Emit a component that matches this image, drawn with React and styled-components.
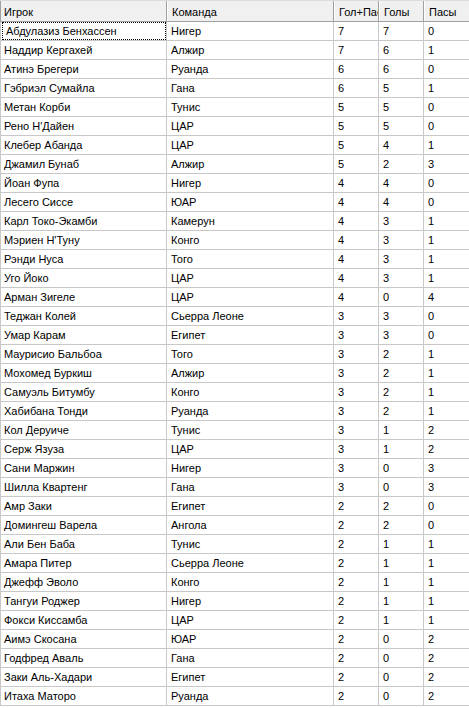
import React from "react";
import styled, { createGlobalStyle } from "styled-components";

const Global = createGlobalStyle`
  html, body { margin: 0; padding: 0; background: #fff; }
  body { font-family: Tahoma, "Liberation Sans", "DejaVu Sans", sans-serif; font-size: 11px; color: #000; }
`;

const rows = [
  ["Абдулазиз Бенхассен", "Нигер", 7, 7, 0],
  ["Наддир Кергахей", "Алжир", 7, 6, 1],
  ["Атинэ Брегери", "Руанда", 6, 6, 0],
  ["Гэбриэл Сумайла", "Гана", 6, 5, 1],
  ["Метан Корби", "Тунис", 5, 5, 0],
  ["Рено Н'Дайен", "ЦАР", 5, 5, 0],
  ["Клебер Абанда", "ЦАР", 5, 4, 1],
  ["Джамил Бунаб", "Алжир", 5, 2, 3],
  ["Йоан Фупа", "Нигер", 4, 4, 0],
  ["Лесего Сиссе", "ЮАР", 4, 4, 0],
  ["Карл Токо-Экамби", "Камерун", 4, 3, 1],
  ["Мэриен Н'Туну", "Конго", 4, 3, 1],
  ["Рэнди Нуса", "Того", 4, 3, 1],
  ["Уго Йоко", "ЦАР", 4, 3, 1],
  ["Арман Зигеле", "ЦАР", 4, 0, 4],
  ["Теджан Колей", "Сьерра Леоне", 3, 3, 0],
  ["Умар Карам", "Египет", 3, 3, 0],
  ["Маурисио Бальбоа", "Того", 3, 2, 1],
  ["Мохомед Буркиш", "Алжир", 3, 2, 1],
  ["Самуэль Битумбу", "Конго", 3, 2, 1],
  ["Хабибана Тонди", "Руанда", 3, 2, 1],
  ["Кол Деруиче", "Тунис", 3, 1, 2],
  ["Серж Язуза", "ЦАР", 3, 1, 2],
  ["Сани Маржин", "Нигер", 3, 0, 3],
  ["Шилла Квартенг", "Гана", 3, 0, 3],
  ["Амр Заки", "Египет", 2, 2, 0],
  ["Домингеш Варела", "Ангола", 2, 2, 0],
  ["Али Бен Баба", "Тунис", 2, 1, 1],
  ["Амара Питер", "Сьерра Леоне", 2, 1, 1],
  ["Джефф Эволо", "Конго", 2, 1, 1],
  ["Тангуи Роджер", "Нигер", 2, 1, 1],
  ["Фокси Киссамба", "ЦАР", 2, 1, 1],
  ["Аимэ Скосана", "ЮАР", 2, 0, 2],
  ["Годфред Аваль", "Гана", 2, 0, 2],
  ["Заки Аль-Хадари", "Египет", 2, 0, 2],
  ["Итаха Маторо", "Руанда", 2, 0, 2],
];

const COLS = "167px 167px 45px 45px 1fr";

const List = styled.div`
  width: 469px;
  height: 708px;
  overflow: hidden;
  background: #fff;
`;

const HeaderRow = styled.div`
  display: grid;
  grid-template-columns: ${COLS};
  height: 22px;
  box-sizing: border-box;
  background: #f0f0f0;
  border-top: 1px solid #dcdcdc;
  border-bottom: 1px solid #a0a0a0;
`;

const HeaderCell = styled.div`
  box-sizing: border-box;
  height: 20px;
  padding: 2px 0 0 4px;
  line-height: 18px;
  white-space: nowrap;
  overflow: hidden;
  border-right: 1px solid #a0a0a0;
  border-left: 1px solid #ffffff;
  &:first-child { border-left: 1px solid #a0a0a0; padding-left: 3px; }
  &:last-child { border-right: none; }
`;

const Row = styled.div`
  display: grid;
  grid-template-columns: ${COLS};
  height: 19px;
  box-sizing: border-box;
  border-bottom: 1px solid #c8c8c8;
`;

const Cell = styled.div`
  box-sizing: border-box;
  height: 18px;
  line-height: 19px;
  padding-left: ${(p) => (p.$first ? "3px" : "4px")};
  white-space: nowrap;
  overflow: hidden;
  border-right: 1px solid #c8c8c8;
  border-left: ${(p) => (p.$first ? "1px solid #c8c8c8" : "none")};
  &:last-child { border-right: none; }
`;

const FocusCell = styled.div`
  box-sizing: border-box;
  height: 18px;
  border-right: 1px solid #c8c8c8;
  border-left: 1px solid #c8c8c8;
`;

const Focus = styled.div`
  box-sizing: border-box;
  height: 18px;
  line-height: 17px;
  padding-left: 3px;
  margin-left: 1px;
  white-space: nowrap;
  overflow: hidden;
  border: 1px dotted #000;
`;

export default function App() {
  const headers = ["Игрок", "Команда", "Гол+Пас", "Голы", "Пасы"];
  return (
    <>
      <Global />
      <List>
        <HeaderRow>
          {headers.map((h) => (
            <HeaderCell key={h}>{h}</HeaderCell>
          ))}
        </HeaderRow>
        {rows.map((r, i) => (
          <Row key={r[0]}>
            {i === 0 ? (
              <FocusCell>
                <Focus>{r[0]}</Focus>
              </FocusCell>
            ) : (
              <Cell $first>{r[0]}</Cell>
            )}
            <Cell>{r[1]}</Cell>
            <Cell>{r[2]}</Cell>
            <Cell>{r[3]}</Cell>
            <Cell>{r[4]}</Cell>
          </Row>
        ))}
      </List>
    </>
  );
}
